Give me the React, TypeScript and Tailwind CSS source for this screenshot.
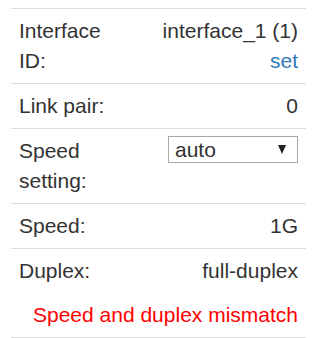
import React from "react";

function Row({
  label,
  children,
  border = true,
}: {
  label?: React.ReactNode;
  children: React.ReactNode;
  border?: boolean;
}) {
  return (
    <div className={`flex ${border ? "border-t border-[#dddddd]" : ""}`}>
      <div className="w-[120px] shrink-0 px-2 py-[7px]">{label}</div>
      <div className="flex-1 px-2 py-[7px] text-right">{children}</div>
    </div>
  );
}

export default function App() {
  return (
    <div className="w-[329px] h-[338px] bg-white pt-[8px] overflow-hidden">
      <div
        className="ml-[11px] w-[295px] text-[21px] leading-[30px] text-[#333333] border-b border-[#dddddd]"
        style={{ fontFamily: '"Liberation Sans", Arial, sans-serif' }}
      >
        <Row label="Interface ID:">
          <div>interface_1 (1)</div>
          <div className="text-[#337ab7]">set</div>
        </Row>
        <Row label="Link pair:">0</Row>
        <Row label="Speed setting:">
          <div className="flex justify-end">
            <div className="w-[130px] h-[27px] border border-[#a9a9a9] flex items-center justify-between pl-[6px] pr-[11px] leading-[25px]">
              <span>auto</span>
              <svg width="8" height="9" viewBox="0 0 8 9">
                <polygon points="0,0 8,0 4,9" fill="#222" />
              </svg>
            </div>
          </div>
        </Row>
        <Row label="Speed:">1G</Row>
        <Row label="Duplex:">full-duplex</Row>
        <div className="px-2 py-[7px] text-right text-[#ff0000]">
          Speed and duplex mismatch
        </div>
      </div>
    </div>
  );
}
